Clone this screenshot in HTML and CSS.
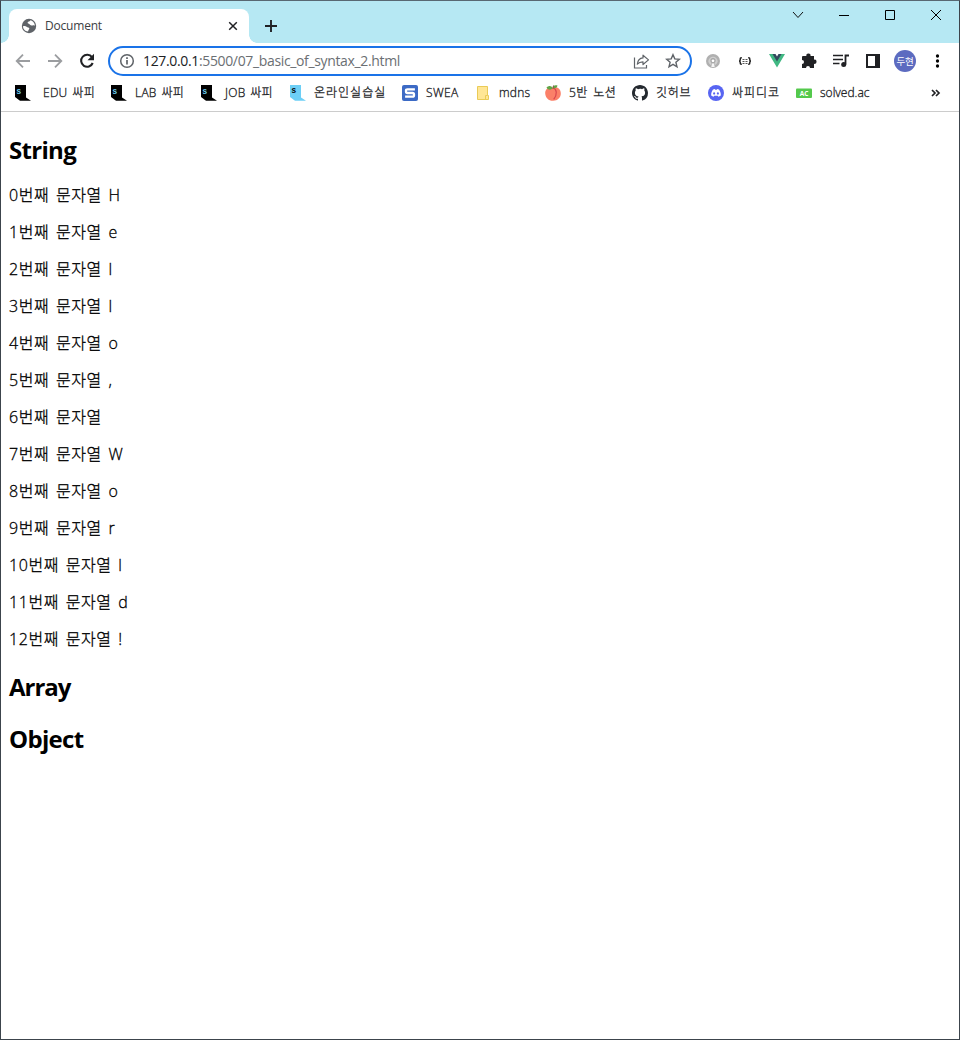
FILE: index.html
```html
<!DOCTYPE html>
<html lang="ko">
<head>
<meta charset="utf-8">
<title>Document</title>
<link rel="stylesheet" href="styles.css">
</head>
<body>
<div class="window">
  <header class="tabs">
    <div class="tab">
      <svg class="globe" width="16" height="16" viewBox="0 0 16 16"><circle cx="8" cy="8" r="7.2" fill="#5f6368"/><path d="M2 8.200c1.500-.5 2.800-.3 3.600.6.8.900 2.500.400 2.700 1.500.2 1-1 1.200-1.200 3.100C4 13.200 2 11 2 8.200zM9.500 2.300c-.3 1.300-2.600 1-2.900 2.300-.2 1.200 1.600.9 2.200 2 .6 1 2.200 1.300 3.300.7.700-.3 1.200 0 1.800.3C13.700 5 12 3 9.500 2.300z" fill="#fff"/></svg>
      <span class="tab-title">Document</span>
      <svg class="tab-close" width="10" height="10" viewBox="0 0 10 10"><path d="M1.200 1.200l7.600 7.600M8.800 1.200L1.200 8.800" stroke="#202124" stroke-width="1.500"/></svg>
    </div>
    <svg class="new-tab" width="12" height="12" viewBox="0 0 12 12"><path d="M6 0v12M0 6h12" stroke="#202124" stroke-width="1.900"/></svg>
    <div class="controls">
      <svg width="46" height="28" viewBox="0 0 46 28"><path d="M18 11l5 5.500 5-5.500" fill="none" stroke="#111"/></svg>
      <svg width="46" height="28" viewBox="0 0 46 28"><path d="M18 14.500h10" stroke="#000"/></svg>
      <svg width="46" height="28" viewBox="0 0 46 28"><path d="M18.500 9.500h9v9h-9z" fill="none" stroke="#000"/></svg>
      <svg width="46" height="28" viewBox="0 0 46 28"><path d="M18 9l10 10M28 9L18 19" stroke="#000"/></svg>
    </div>
  </header>

  <div class="toolbar">
    <svg width="32" height="20" viewBox="0 0 32 20"><path d="M29 10H16M22 3.700L15.700 10l6.300 6.300" fill="none" stroke="#9b9da0" stroke-width="1.800"/></svg>
    <svg width="32" height="20" viewBox="0 0 32 20"><path d="M15 10h13M22 3.700l6.300 6.300-6.300 6.300" fill="none" stroke="#9b9da0" stroke-width="1.800"/></svg>
    <svg width="32" height="20" viewBox="0 0 32 20"><path d="M27 6.200A6 6 0 1 0 27.700 12" fill="none" stroke="#202124" stroke-width="2.100"/><path d="M29 2.800v6.500h-6.500z" fill="#202124"/></svg>
    <div class="address">
      <svg class="info" width="16" height="16" viewBox="0 0 16 16"><circle cx="8" cy="8" r="6.300" fill="none" stroke="#5f6368" stroke-width="1.500"/><path d="M8 7v4.500M8 4.300v1.600" stroke="#5f6368" stroke-width="1.700"/></svg>
      <span class="url"><span class="host">127.0.0.1</span>:5500/07_basic_of_syntax_2.html</span>
      <svg class="share" width="18" height="16" viewBox="0 0 18 16"><path d="M1.500 4.500v10.500h12V12" fill="none" stroke="#5f6368" stroke-width="1.200"/><path d="M4.300 11.200c.4-4 2.400-6 5.700-6.300V2.200l5.500 4.700-5.500 4.600V8.800c-2.700 0-4.400.8-5.700 2.400z" fill="none" stroke="#5f6368" stroke-width="1.200" stroke-linejoin="round"/></svg>
      <svg class="star" width="16" height="16" viewBox="0 0 16 16"><path d="M8 1.700l1.800 4.200 4.600.4-3.500 3 1.100 4.500L8 11.400l-4 2.400 1.100-4.500-3.500-3 4.600-.4z" fill="none" stroke="#5f6368" stroke-width="1.400"/></svg>
    </div>
    <div class="extensions">
      <svg width="32" height="24" viewBox="0 0 32 24"><circle cx="16" cy="12" r="7" fill="#b0b0b0"/><path d="M11.300 12.500a4.700 4.700 0 0 1 9.400 0c-.4 2-1.500 3-2.700 3.500l-.5-2h-3l-.5 2c-1.200-.5-2.300-1.500-2.700-3.500z" fill="#cfcfcf"/><circle cx="16" cy="11.500" r="2.600" fill="#a5a5a5"/><circle cx="16" cy="11.800" r="1.400" fill="#fff"/><path d="M15 14.500h2l.7 3.500h-3.400z" fill="#f5f5f5"/></svg>
      <svg width="32" height="24" viewBox="0 0 32 24"><path d="M12.800 8.800h-.5q-1.100 0-1.100 1.100v1q0 1.100-1.200 1.100 1.200 0 1.200 1.100v1q0 1.100 1.100 1.100h.5M19.200 8.800h.5q1.100 0 1.100 1.100v1q0 1.100 1.200 1.100-1.200 0-1.200 1.100v1q0 1.100-1.100 1.100h-.5" fill="none" stroke="#222" stroke-width="1.500"/><path d="M13.500 10.500h2M16.500 10.500h2M13.500 12.500h2M16.500 12.500h2M13.500 14.500h2M16.500 14.500h2" stroke="#555"/></svg>
      <svg width="32" height="24" viewBox="0 0 32 24"><path d="M8 5h4.500L16 11l3.500-6H24l-8 13.500z" fill="#41b883"/><path d="M11.500 5h3L16 7.600 17.500 5h3L16 12.600z" fill="#34495e"/></svg>
      <svg width="32" height="24" viewBox="0 0 32 24"><path d="M10 7h3.400a2.100 2.100 0 1 1 4.100 0H21v3.700a2.100 2.100 0 1 1 0 4.100V19h-4a2 2 0 0 0-4 0H9v-4a2 2 0 0 0 0-4V8q0-1 1-1z" fill="#202124"/></svg>
      <svg width="32" height="24" viewBox="0 0 32 24"><path d="M8 6.500h10M8 10.500h10M8 14.500h6.500" stroke="#202124" stroke-width="1.700"/><path d="M20.500 15.500v-9H24" fill="none" stroke="#202124" stroke-width="1.800"/><circle cx="18.700" cy="15.500" r="2.500" fill="#202124"/></svg>
      <svg width="32" height="24" viewBox="0 0 32 24"><path d="M9 5h14v14H9zM11 7v10h7V7z" fill="#202124" fill-rule="evenodd"/></svg>
      <span class="avatar">두현</span>
      <svg width="32" height="24" viewBox="0 0 32 24"><circle cx="16.500" cy="7" r="1.650"/><circle cx="16.500" cy="12" r="1.650"/><circle cx="16.500" cy="17" r="1.650"/></svg>
    </div>
  </div>

  <svg width="0" height="0" class="defs"><defs><symbol id="ssafy" viewBox="0 0 16 16"><path d="M0 0h11v12.500l5 3.200H5L0 12z"/></symbol></defs></svg>
  <nav class="bookmarks">
    <div class="mark edu"><svg width="16" height="16" viewBox="0 0 16 16"><use href="#ssafy"/><text class="s-mark" x="1.500" y="8.500" fill="#6fd2f5">S</text></svg><span>EDU 싸피</span></div>
    <div class="mark lab"><svg width="16" height="16" viewBox="0 0 16 16"><use href="#ssafy"/><text class="s-mark" x="1.500" y="8.500" fill="#6fd2f5">S</text></svg><span>LAB 싸피</span></div>
    <div class="mark job"><svg width="16" height="16" viewBox="0 0 16 16"><use href="#ssafy"/><text class="s-mark" x="1.500" y="8.500" fill="#6fd2f5">S</text></svg><span>JOB 싸피</span></div>
    <div class="mark practice"><svg width="16" height="16" viewBox="0 0 16 16"><use href="#ssafy" fill="#6dcff6"/><text class="s-mark" x="1.500" y="8" fill="#000">S</text></svg><span>온라인실습실</span></div>
    <div class="mark swea"><svg width="16" height="16" viewBox="0 0 16 16"><rect width="16" height="16" rx="2" fill="#3c6ac5"/><path d="M12.900 4.300H5.500Q4 4.300 4 5.500v1Q4 8 5.500 8h5Q12 8 12 9.500v.7q0 1.500-1.500 1.500H3.100" fill="none" stroke="#fff" stroke-width="2.300"/></svg><span>SWEA</span></div>
    <div class="mark mdns"><svg width="16" height="16" viewBox="0 0 16 16"><path d="M2.500 1.500h10v9h1v4h-11z" fill="#ffe695" stroke="#eacb57"/><path d="M10.500 14v-3.500h2" fill="none" stroke="#eacb57"/></svg><span>mdns</span></div>
    <div class="mark notion"><svg width="16" height="16" viewBox="0 0 16 16"><path d="M8 2.700C4 .8 0 4 .2 8.500.5 13 4 16 8 15.800c4.500.1 8-3.300 7.800-7.500C15.700 3.500 12 1 8 2.700z" fill="#fb8068"/><path d="M8 3c4 1 4.500 6.500.7 11.300" fill="none" stroke="#d9454e" stroke-width="1.200"/><path d="M7.800 3.300C5.500 5.500 3 5 1.500 2.500 4 .2 6.500.5 7.800 3.300zM8.200 3c-.4-2.200 1.300-3.400 4.300-2.500-.6 2.300-2.100 3.300-4.300 2.500z" fill="#61a548"/><path d="M7.900 3.500L8.500.500" stroke="#805139"/></svg><span>5반 노션</span></div>
    <div class="mark github"><svg width="16" height="16" viewBox="0 0 16 16"><path fill="#24292f" d="M8 0C3.580 0 0 3.580 0 8c0 3.540 2.290 6.530 5.470 7.590.4.070.55-.17.55-.38 0-.19-.01-.82-.01-1.490-2.010.37-2.530-.49-2.690-.94-.09-.23-.48-.94-.82-1.130-.28-.15-.68-.52-.01-.53.63-.01 1.080.58 1.230.82.72 1.210 1.870.87 2.330.66.07-.52.28-.87.51-1.070-1.780-.2-3.640-.89-3.640-3.950 0-.87.31-1.590.82-2.150-.08-.2-.36-1.020.08-2.120 0 0 .67-.21 2.200.82A7.600 7.600 0 0 1 8 3.870c.68 0 1.360.09 2 .26 1.530-1.040 2.200-.82 2.200-.82.44 1.100.16 1.920.08 2.120.51.56.82 1.270.82 2.150 0 3.070-1.870 3.750-3.650 3.950.29.25.54.73.54 1.480 0 1.070-.01 1.930-.01 2.200 0 .21.15.46.55.38A8.010 8.010 0 0 0 16 8c0-4.420-3.580-8-8-8z"/></svg><span>깃허브</span></div>
    <div class="mark discord"><svg width="16" height="16" viewBox="0 0 16 16"><circle cx="8" cy="8" r="8" fill="#5865f2"/><path d="M5 4.500l1.800-.5.500.8h1.400l.5-.8 1.800.5c1.400 2 2 4 1.800 6-.8.700-1.600 1-2.400 1.200l-.6-1H6.200l-.6 1c-.8-.2-1.600-.5-2.400-1.200-.2-2 .4-4 1.800-6z" fill="#fff"/><ellipse cx="6.100" cy="8.400" rx="1" ry="1.200" fill="#5865f2"/><ellipse cx="9.900" cy="8.400" rx="1" ry="1.200" fill="#5865f2"/></svg><span>싸피디코</span></div>
    <div class="mark solved"><svg width="16" height="16" viewBox="0 0 16 16"><rect y="3.500" width="16" height="9.500" rx="1" fill="#54c94c"/><text class="ac" x="8" y="10.500" text-anchor="middle" fill="#fff">AC</text></svg><span>solved.ac</span></div>
    <svg class="more" width="10" height="8" viewBox="0 0 10 8"><path d="M1 1l3 3-3 3M5 1l3 3-3 3" fill="none" stroke="#202124" stroke-width="1.700"/></svg>
  </nav>

  <main class="page">
    <h2>String</h2>
    <p>0번째 문자열 H</p>
    <p>1번째 문자열 e</p>
    <p>2번째 문자열 l</p>
    <p>3번째 문자열 l</p>
    <p>4번째 문자열 o</p>
    <p>5번째 문자열 ,</p>
    <p>6번째 문자열 </p>
    <p>7번째 문자열 W</p>
    <p>8번째 문자열 o</p>
    <p>9번째 문자열 r</p>
    <p>10번째 문자열 l</p>
    <p>11번째 문자열 d</p>
    <p>12번째 문자열 !</p>
    <h2 class="array">Array</h2>
    <h2>Object</h2>
  </main>
</div>
</body>
</html>
```
FILE: styles.css
```css
* { box-sizing: border-box; }
body { margin: 0; background: #fff; font-family: "Open Sans", "Noto Sans CJK KR", sans-serif; color: #000; }
svg { display: block; flex: none; }
.defs { height: 0; }
.window { height: 1040px; border: 1px solid #3c444c; border-top-color: #586872; display: flex; flex-direction: column; overflow: hidden; }
.tabs { height: 42px; flex: none; background: #b6e8f3; display: flex; padding-left: 8px; }
.tab { width: 240px; height: 34px; margin-top: 8px; background: #fff; border-radius: 8px 8px 0 0; display: flex; align-items: center; padding: 0 11px 0 12px; position: relative; }
.tab::before, .tab::after { content: ""; position: absolute; bottom: 0; width: 8px; height: 8px; }
.tab::before { right: 100%; background: radial-gradient(circle at 0 0, transparent 7.5px, #fff 8px); }
.tab::after { left: 100%; background: radial-gradient(circle at 100% 0, transparent 7.5px, #fff 8px); }
.tab-title { font-size: 12px; line-height: 16px; margin-left: 8px; color: #3c4043; letter-spacing: -.2px; }
.tab-close { margin-left: auto; }
.new-tab { margin: 19px 0 0 16px; }
.controls { display: flex; margin-left: auto; }
.toolbar { height: 36px; flex: none; display: flex; align-items: center; }
.address { width: 584px; height: 30px; margin-left: 11px; border: 2px solid #1a73e8; border-radius: 15px; display: flex; align-items: center; padding: 0 9px; }
.url { font-size: 14px; line-height: 18px; margin-left: 8px; color: #6b6f73; letter-spacing: -.35px; white-space: nowrap; }
.host { color: #202124; }
.share { margin-left: auto; }
.star { margin-left: 14px; }
.extensions { display: flex; align-items: center; margin-left: 5px; }
.avatar { width: 22px; height: 22px; margin: 0 5px; border-radius: 50%; background: #5c6bc0; color: #fff; font: 9.500px/22px "Noto Sans CJK KR", sans-serif; text-align: center; letter-spacing: -.3px; }
.bookmarks { height: 33px; flex: none; border-bottom: 1px solid #ccc; padding: 6px 0 0 14px; display: grid; grid-template-columns: 96px 90px 89px 112px 73px 70px 87px 76px 88px 135px auto; justify-content: start; }
.mark { display: flex; height: 16px; gap: 8px; font-size: 12px; line-height: 15px; white-space: nowrap; color: #202124; }
.edu { gap: 12px; }
.mark span { font-weight: 300; -webkit-text-stroke: .3px #202124; }
.edu span, .lab span, .job span { letter-spacing: .25px; word-spacing: 1.5px; }
.practice span, .discord span { letter-spacing: 1px; }
.notion span { letter-spacing: .4px; word-spacing: 2px; }
.github span { letter-spacing: .7px; }
.swea span { letter-spacing: .4px; }
.mdns span { letter-spacing: .2px; }
.s-mark { font: bold 7.500px "Liberation Mono", monospace; }
.ac { font: bold 6.500px "Open Sans", sans-serif; }
.more { margin-top: 4px; }
.page { padding: 0 8px; display: flow-root; }
.page h2 { margin: 20px 0; height: 32px; font-size: 24px; line-height: 35px; font-weight: 700; letter-spacing: -.7px; }
.page .array { letter-spacing: -1px; }
.page p { margin: 16px 0; height: 21px; font-size: 16px; line-height: 23px; font-weight: 300; -webkit-text-stroke: .3px #000; letter-spacing: .6px; word-spacing: 1.800px; white-space: nowrap; }
```
